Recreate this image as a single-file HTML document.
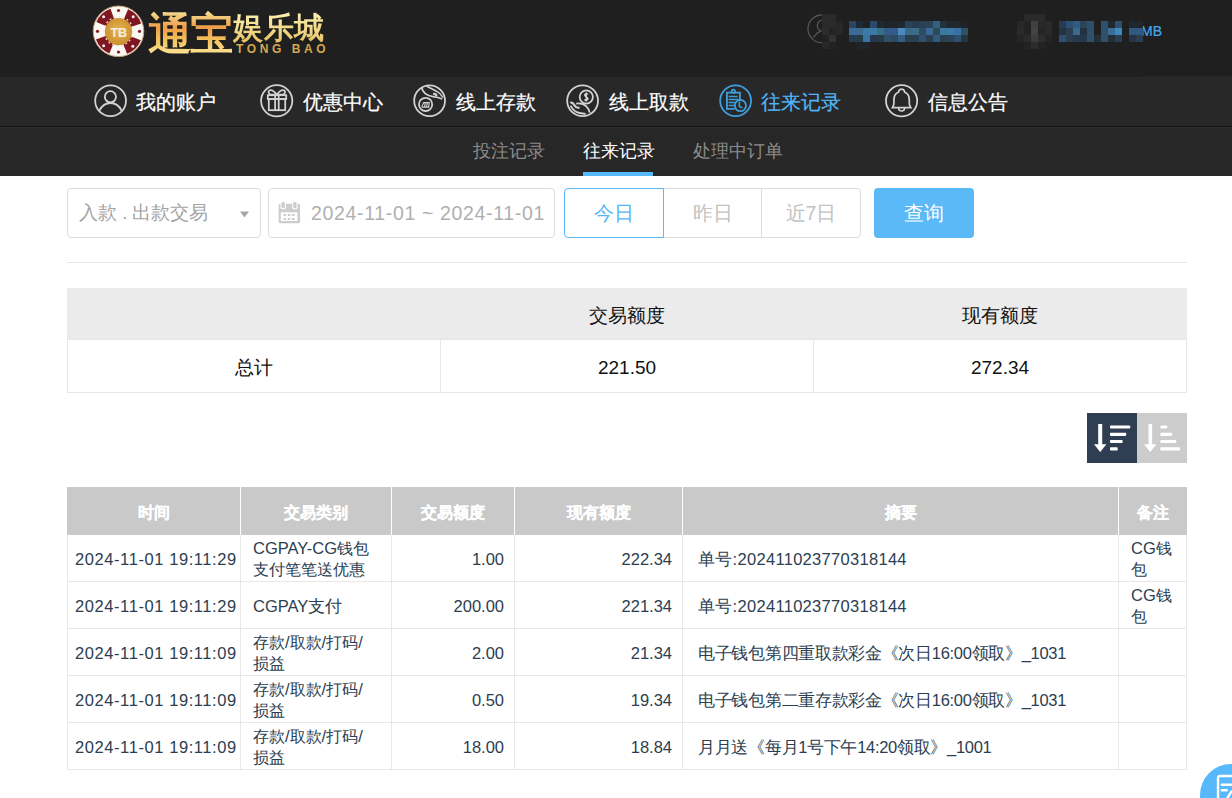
<!DOCTYPE html>
<html><head><meta charset="utf-8">
<style>
*{margin:0;padding:0;box-sizing:border-box}
html,body{width:1232px;height:798px;overflow:hidden;background:#fff;font-family:"Liberation Sans",sans-serif;position:relative}
.a{position:absolute}
i{position:absolute;display:block;width:7px;height:7px}
#hdr{left:0;top:0;width:1232px;height:76px;background:#1f1f1f}
#nav{left:0;top:76px;width:1232px;height:50px;background:#282828}
#navline{left:0;top:126px;width:1232px;height:1px;background:#141414}
#navline2{left:0;top:127px;width:1232px;height:1px;background:#2f2f2f}
#sub{left:0;top:128px;width:1232px;height:48px;background:#272727}
.ni{color:#fff;font-size:20px;line-height:24px;top:90px;white-space:nowrap;-webkit-text-stroke:0.2px currentColor}
.ic{position:absolute;top:82px;width:40px;height:40px}
.si{font-size:18px;line-height:22px;top:141px;color:#8c8c8c;white-space:nowrap}
.box{border:1px solid #dcdcdc;border-radius:4px;background:#fff}
.ph{color:#a3a3a3;font-size:18.5px;line-height:22px;white-space:nowrap}
.btn{top:188px;height:50px;border:1px solid #dcdcdc;color:#c2c2c2;font-size:19.5px;line-height:48px;text-align:center;background:#fff}
.th{height:48px;line-height:48px;text-align:center;color:#fff;font-weight:bold;font-size:16px;-webkit-text-stroke:0.25px #fff}
.td{height:46px;line-height:48px;font-size:16.5px;color:#2c3e50;white-space:nowrap}
.td2{height:46px;padding-top:3px;line-height:21px;font-size:16px;color:#2c3e50;white-space:nowrap}
.td .n,.td2 .n{font-size:16.5px}
.sh{height:52px;line-height:52px;text-align:center;font-size:18.5px;color:#111}
.sv{height:52px;line-height:52px;text-align:center;font-size:19px;color:#111}
</style></head><body>
<div id="hdr" class="a"></div>
<div id="nav" class="a"></div><div class="a" style="left:0;top:76px;width:1142px;height:1px;background:#1f1f1f"></div>
<div id="navline" class="a"></div>
<div id="navline2" class="a"></div>
<div id="sub" class="a"></div>

<!-- logo -->
<svg class="a" style="left:88px;top:2px" width="70" height="60" viewBox="0 0 70 60">
 <defs><radialGradient id="gd" cx="50%" cy="45%" r="55%"><stop offset="0" stop-color="#e8b54e"/><stop offset="1" stop-color="#c98d2e"/></radialGradient></defs>
 <circle cx="30.5" cy="29.3" r="25.3" fill="#fbf7f2" stroke="#c7a07a" stroke-width="1"/>
 <circle cx="30.5" cy="29.3" r="18.5" fill="none" stroke="#7f1620" stroke-width="11" stroke-dasharray="15.2 13.86" stroke-dashoffset="-7" transform="rotate(0 30.5 29.3)"/>
 <circle cx="30.5" cy="8.5" r="1.6" fill="#8a1a22"/><circle cx="30.5" cy="50" r="1.6" fill="#8a1a22"/>
 <circle cx="9.5" cy="29.3" r="1.6" fill="#8a1a22"/><circle cx="51.5" cy="29.3" r="1.6" fill="#8a1a22"/>
 <circle cx="30.5" cy="29.3" r="14.5" fill="none" stroke="#f2e6e0" stroke-width="1.2" stroke-dasharray="2 2.5"/><g fill="#f4eeee"><circle cx="15.6" cy="14.8" r="1.5"/><circle cx="45.2" cy="14.8" r="1.5"/><circle cx="15.6" cy="43.8" r="1.5"/><circle cx="44.8" cy="44.2" r="1.5"/></g>
 <circle cx="30.5" cy="29.7" r="13.6" fill="url(#gd)"/>
 <circle cx="30.5" cy="29.7" r="11.5" fill="none" stroke="#d59c3a" stroke-width="1"/>
 <text x="30.8" y="34.5" text-anchor="middle" font-family="Liberation Sans" font-weight="bold" font-size="12.5" fill="#f4efe6">TB</text>
</svg>
<div class="a" style="left:148px;top:10px;font-family:'Liberation Serif',serif;font-weight:bold;font-size:44px;line-height:50px;white-space:nowrap;letter-spacing:-2px;background:linear-gradient(180deg,#f6e49a 0%,#ee9c48 35%,#f3c45e 62%,#fff1b0 100%);-webkit-background-clip:text;background-clip:text;color:transparent">通宝</div>
<div class="a" style="left:233px;top:10px;font-family:'Liberation Serif',serif;font-weight:bold;font-size:30px;line-height:36px;letter-spacing:0.6px;white-space:nowrap;background:linear-gradient(180deg,#fff3b8 0%,#f1d783 60%,#e2b85a 100%);-webkit-background-clip:text;background-clip:text;color:transparent">娱乐城</div>
<div class="a" style="left:236px;top:42px;font-family:'Liberation Sans',sans-serif;font-weight:bold;font-size:12px;line-height:14px;letter-spacing:3.6px;white-space:nowrap;color:#d2a850">TONG BAO</div>

<!-- user info (pixelated) -->
<svg class="a" style="left:800px;top:8px" width="30" height="40" viewBox="0 0 30 40" fill="none" stroke="#555" stroke-width="1.3"><path d="M21.8,7 A13.85,13.85 0 0 0 21.8,34.7"/><path d="M21.8,12.2 C16.5,13.5 15.8,20.5 20.8,22.8 C17.5,24.5 15,26.5 13,29.5"/></svg>
<div class="a" style="left:1141px;top:23px;font-size:14px;line-height:17px;color:#45a8f0;-webkit-text-stroke:0.2px #45a8f0">MB</div>
<i style="left:822px;top:14px;background:#2a2a2a"></i><i style="left:829px;top:14px;background:#2a2a2a"></i><i style="left:822px;top:21px;background:#2a2a2a"></i><i style="left:829px;top:21px;background:#2a2a2a"></i><i style="left:836px;top:21px;background:#272727"></i><i style="left:822px;top:28px;background:#2c2c2c"></i><i style="left:829px;top:28px;background:#232323"></i><i style="left:836px;top:28px;background:#282828"></i><i style="left:822px;top:35px;background:#222222"></i><i style="left:829px;top:35px;background:#333333"></i><i style="left:822px;top:42px;background:#282828"></i><i style="left:829px;top:42px;background:#222222"></i>
<i style="left:849px;top:21px;background:#2a4560"></i><i style="left:856px;top:21px;background:#1f2a35"></i><i style="left:863px;top:21px;background:#1f2124"></i><i style="left:870px;top:21px;background:#2a4a68"></i><i style="left:877px;top:21px;background:#202830"></i><i style="left:884px;top:21px;background:#1f252b"></i><i style="left:891px;top:21px;background:#1f252b"></i><i style="left:898px;top:21px;background:#20282f"></i><i style="left:905px;top:21px;background:#2a4255"></i><i style="left:912px;top:21px;background:#273d4d"></i><i style="left:919px;top:21px;background:#2a3f55"></i><i style="left:926px;top:21px;background:#2b4358"></i><i style="left:933px;top:21px;background:#336080"></i><i style="left:940px;top:21px;background:#24303a"></i><i style="left:947px;top:21px;background:#20272d"></i><i style="left:954px;top:21px;background:#202830"></i><i style="left:961px;top:21px;background:#1f2226"></i><i style="left:849px;top:28px;background:#3a6a9a"></i><i style="left:856px;top:28px;background:#3a6a8f"></i><i style="left:863px;top:28px;background:#3a7aa5"></i><i style="left:870px;top:28px;background:#3a7aa5"></i><i style="left:877px;top:28px;background:#3a6e85"></i><i style="left:884px;top:28px;background:#345a8a"></i><i style="left:891px;top:28px;background:#335c8c"></i><i style="left:898px;top:28px;background:#4a8ac0"></i><i style="left:905px;top:28px;background:#3a6a88"></i><i style="left:912px;top:28px;background:#3a6e88"></i><i style="left:919px;top:28px;background:#2c4a60"></i><i style="left:926px;top:28px;background:#3a6a99"></i><i style="left:933px;top:28px;background:#2e4a55"></i><i style="left:940px;top:28px;background:#3a7aa0"></i><i style="left:947px;top:28px;background:#3a7aa5"></i><i style="left:954px;top:28px;background:#3a72a5"></i><i style="left:961px;top:28px;background:#2f5060"></i><i style="left:849px;top:35px;background:#263a50"></i><i style="left:856px;top:35px;background:#263c48"></i><i style="left:863px;top:35px;background:#3a74a0"></i><i style="left:870px;top:35px;background:#263850"></i><i style="left:877px;top:35px;background:#283a45"></i><i style="left:884px;top:35px;background:#2f5068"></i><i style="left:891px;top:35px;background:#2e4a60"></i><i style="left:898px;top:35px;background:#365e80"></i><i style="left:905px;top:35px;background:#2a4050"></i><i style="left:912px;top:35px;background:#2a4050"></i><i style="left:919px;top:35px;background:#2f5070"></i><i style="left:926px;top:35px;background:#2a3f50"></i><i style="left:933px;top:35px;background:#305a80"></i><i style="left:940px;top:35px;background:#2a4050"></i><i style="left:947px;top:35px;background:#2a4355"></i><i style="left:954px;top:35px;background:#2f5070"></i><i style="left:961px;top:35px;background:#263540"></i><i style="left:856px;top:42px;background:#1f2428"></i><i style="left:863px;top:42px;background:#1f2428"></i>
<i style="left:1024px;top:14px;background:#2a2a2a"></i><i style="left:1031px;top:14px;background:#2a2a2a"></i><i style="left:1038px;top:14px;background:#2a2a2a"></i><i style="left:1017px;top:21px;background:#282828"></i><i style="left:1024px;top:21px;background:#232323"></i><i style="left:1031px;top:21px;background:#404040"></i><i style="left:1038px;top:21px;background:#282828"></i><i style="left:1045px;top:21px;background:#2a2a2a"></i><i style="left:1017px;top:28px;background:#2a2a2a"></i><i style="left:1024px;top:28px;background:#222222"></i><i style="left:1031px;top:28px;background:#444444"></i><i style="left:1038px;top:28px;background:#252525"></i><i style="left:1045px;top:28px;background:#2a2a2a"></i><i style="left:1017px;top:35px;background:#252525"></i><i style="left:1024px;top:35px;background:#2a2a2a"></i><i style="left:1031px;top:35px;background:#3c3c3c"></i><i style="left:1038px;top:35px;background:#2e2e2e"></i><i style="left:1045px;top:35px;background:#242424"></i><i style="left:1024px;top:42px;background:#232323"></i><i style="left:1031px;top:42px;background:#2c2c2c"></i><i style="left:1038px;top:42px;background:#232323"></i>
<i style="left:1059px;top:21px;background:#263a55"></i><i style="left:1066px;top:21px;background:#2e5070"></i><i style="left:1073px;top:21px;background:#335a80"></i><i style="left:1080px;top:21px;background:#2a4558"></i><i style="left:1087px;top:21px;background:#2f5068"></i><i style="left:1101px;top:21px;background:#2e5070"></i><i style="left:1108px;top:21px;background:#20282e"></i><i style="left:1115px;top:21px;background:#2e5070"></i><i style="left:1129px;top:21px;background:#20282e"></i><i style="left:1136px;top:21px;background:#20282e"></i><i style="left:1059px;top:28px;background:#233345"></i><i style="left:1066px;top:28px;background:#2a4050"></i><i style="left:1073px;top:28px;background:#3a6a90"></i><i style="left:1080px;top:28px;background:#223040"></i><i style="left:1087px;top:28px;background:#2f5068"></i><i style="left:1101px;top:28px;background:#2f5068"></i><i style="left:1108px;top:28px;background:#3a6e99"></i><i style="left:1115px;top:28px;background:#3e88bb"></i><i style="left:1129px;top:28px;background:#2f5a80"></i><i style="left:1136px;top:28px;background:#2f5a80"></i><i style="left:1059px;top:35px;background:#2f5070"></i><i style="left:1066px;top:35px;background:#2a4050"></i><i style="left:1073px;top:35px;background:#263a4a"></i><i style="left:1080px;top:35px;background:#263850"></i><i style="left:1087px;top:35px;background:#2f5068"></i><i style="left:1094px;top:35px;background:#22303a"></i><i style="left:1101px;top:35px;background:#2f5068"></i><i style="left:1108px;top:35px;background:#22303a"></i><i style="left:1115px;top:35px;background:#2a4050"></i><i style="left:1129px;top:35px;background:#263445"></i><i style="left:1136px;top:35px;background:#2a4050"></i>
<!-- nav icons -->
<svg class="ic" style="left:90px" viewBox="0 0 40 40" fill="none" stroke="#d2d2d2" stroke-width="1.8">
 <circle cx="20.6" cy="18.8" r="15.4"/><circle cx="20.4" cy="14.8" r="5.6"/>
 <path d="M9.4,28.6 C12,23.5 16,21 20.5,21 C25,21 29,23.5 31.6,28.6"/>
</svg>
<svg class="ic" style="left:256px" viewBox="0 0 40 40" fill="none" stroke="#d2d2d2" stroke-width="1.8">
 <circle cx="20.7" cy="18.8" r="15.6"/>
 <rect x="11.8" y="13.2" width="18.4" height="3.8"/><rect x="12.8" y="17" width="16.4" height="11.2"/>
 <path d="M19.1,13.2 V28.2 M22.7,13.2 V28.2"/>
 <path d="M20.8,12.6 C18,9 15,7.5 13.2,8.6 C12,9.5 12.6,12 14.5,12.6 Z M20.8,12.6 C23.6,9 26.6,7.5 28.4,8.6 C29.6,9.5 29,12 27.1,12.6 Z"/>
</svg>
<svg class="ic" style="left:409px" viewBox="0 0 40 40" fill="none" stroke="#d2d2d2" stroke-width="1.8">
 <circle cx="20.6" cy="18.8" r="15.4"/><circle cx="16.6" cy="22.4" r="6.6"/>
 <path d="M12.6,25.1 H20.4 M12.9,24.6 L14.6,20.6 H20.3 L19.6,24.6 M16.4,20.6 L15.6,24.6 M18.3,20.6 L17.6,24.6" stroke-width="1.1"/>
 <path d="M12.6,5.2 C13.5,10.5 18,13.8 24,14.6 C27.5,15 30.5,15.8 33.2,17"/>
 <path d="M17.6,4.2 C21,5.5 24.5,7.8 27.5,9.2 C30.5,10.8 32.6,13 34,15.5" stroke-width="1.5"/>
 <path d="M24.2,12.2 C26,11.5 27.6,12.6 27.3,14.2" stroke-width="2.4"/>
</svg>
<svg class="ic" style="left:562px" viewBox="0 0 40 40" fill="none" stroke="#d2d2d2" stroke-width="1.8">
 <circle cx="20.6" cy="18.8" r="15.4"/><circle cx="24.3" cy="15" r="6.6"/>
 <path d="M26,12.4 C25.2,11.4 22.6,11.6 22.8,13.4 C23,15 25.8,14.8 25.9,16.6 C26,18.4 23.2,18.6 22.5,17.5 M24.3,10.6 V19.4" stroke-width="1.5"/>
 <path d="M8.2,20.8 C9.8,20 11.5,21.5 12.6,23.6 C13.6,25.5 15.6,26 17.5,25.6" stroke-width="2.2"/>
 <path d="M14.2,21.6 C18,21 22,22 24.6,24.6 C26.4,26.5 27.3,28.5 27.6,30.6"/>
 <path d="M8.6,23.6 C10.5,27.6 13.6,30.2 17.6,31 C19.6,31.4 21.6,31.6 23.6,32"/>
</svg>
<svg class="ic" style="left:715px" viewBox="0 0 40 40" fill="none" stroke="#3f9fdc" stroke-width="1.8">
 <circle cx="20.6" cy="18.8" r="15.4"/>
 <path d="M19.6,26.8 H11.9 V10.6 H16.6 M20,10.6 H24.9 V17.2"/>
 <circle cx="18.3" cy="9.3" r="1.7"/>
 <path d="M13.6,14.5 H22.6 M13.6,17.5 H23.6 M13.6,20.5 H19.8 M13.6,23.5 H19.2" stroke-width="1.6"/>
 <circle cx="25.4" cy="23.6" r="5.6"/>
 <path d="M24.4,19.7 V24.4 L27.4,25.9" stroke-width="1.6"/>
</svg>
<svg class="ic" style="left:881px" viewBox="0 0 40 40" fill="none" stroke="#d2d2d2" stroke-width="1.8">
 <circle cx="20.6" cy="18.8" r="15.6"/>
 <path d="M20.6,7.2 C18.7,7.2 17.8,8.7 17.4,10.2 C14.3,11.3 12.9,14.2 12.9,18 V21.5 C12.9,23.2 12.2,24.4 11.4,25.6 H29.8 C29,24.4 28.3,23.2 28.3,21.5 V18 C28.3,14.2 26.9,11.3 23.8,10.2 C23.4,8.7 22.5,7.2 20.6,7.2 Z" stroke-width="1.7"/>
 <path d="M17.6,26 A3,3 0 0 0 23.6,26" stroke-width="1.6"/>
</svg>

<!-- nav items -->
<div class="a ni" style="left:136px">我的账户</div>
<div class="a ni" style="left:303px">优惠中心</div>
<div class="a ni" style="left:456px">线上存款</div>
<div class="a ni" style="left:609px">线上取款</div>
<div class="a ni" style="left:761px;color:#52b5f8">往来记录</div>
<div class="a ni" style="left:928px">信息公告</div>

<!-- subnav -->
<div class="a si" style="left:473px;top:140px">投注记录</div>
<div class="a si" style="left:583px;top:140px;color:#fff">往来记录</div>
<div class="a" style="left:583px;top:172px;width:70px;height:4px;background:#55b8f8"></div>
<div class="a si" style="left:693px;top:140px">处理中订单</div>

<!-- filters -->
<div class="a box" style="left:67px;top:188px;width:194px;height:50px"></div>
<div class="a ph" style="left:79px;top:202px">入款 . 出款交易</div>
<svg class="a" style="left:239px;top:210px" width="11" height="9" viewBox="0 0 11 9"><path d="M1,1.5 H10 L5.5,7.5 Z" fill="#a6a6a6"/></svg>
<div class="a box" style="left:268px;top:188px;width:287px;height:50px"></div>
<svg class="a" style="left:278px;top:201px" width="23" height="24" viewBox="0 0 23 24">
 <path d="M0.6,4.5 Q0.6,2.8 2.3,2.8 H20.4 Q22.1,2.8 22.1,4.5 V20.5 Q22.1,22.2 20.4,22.2 H2.3 Q0.6,22.2 0.6,20.5 Z" fill="#cdcdcd"/>
 <rect x="2.8" y="11.3" width="16.6" height="8.7" fill="#fff"/>
 <rect x="2.5" y="0" width="5.4" height="8.2" rx="1.8" fill="#fff"/><rect x="14.2" y="0" width="5.4" height="8.2" rx="1.8" fill="#fff"/><rect x="3.5" y="1" width="3.4" height="6.2" rx="1.2" fill="#cdcdcd"/><rect x="15.2" y="1" width="3.4" height="6.2" rx="1.2" fill="#cdcdcd"/>
 <g fill="#cdcdcd"><rect x="5.5" y="13" width="2.6" height="2"/><rect x="9.8" y="13" width="2.6" height="2"/><rect x="14" y="13" width="2.6" height="2"/><rect x="5.5" y="17" width="2.6" height="2"/><rect x="9.8" y="17" width="2.6" height="2"/><rect x="14" y="17" width="2.6" height="2"/></g>
</svg>
<div class="a ph" style="left:311px;top:202px;font-size:19.5px;color:#b0b0b0;letter-spacing:0.66px">2024-11-01 ~ 2024-11-01</div>
<div class="a btn" style="left:564px;width:100px;border-radius:4px 0 0 4px;border-color:#5ab8f8;color:#55b5f8;z-index:2">今日</div>
<div class="a btn" style="left:663px;width:99px">昨日</div>
<div class="a btn" style="left:761px;width:100px;border-radius:0 4px 4px 0">近7日</div>
<div class="a" style="left:874px;top:188px;width:100px;height:50px;background:#5bb9f7;border-radius:4px;color:#fff;font-size:19.5px;line-height:50px;text-align:center">查询</div>
<div class="a" style="left:67px;top:262px;width:1120px;height:1px;background:#e6e6e6"></div>


<!-- sort buttons -->
<div class="a" style="left:1087px;top:413px;width:50px;height:50px;background:#2f3e52"></div>
<div class="a" style="left:1137px;top:413px;width:50px;height:50px;background:#cccccc"></div>
<svg class="a" style="left:1087px;top:413px" width="100" height="50" viewBox="0 0 100 50" fill="#fff">
 <rect x="11.2" y="11" width="4" height="21"/><path d="M7,31.2 H19.4 L13.2,39 Z"/>
 <rect x="23" y="12.4" width="20.2" height="3.2" rx="0.8"/><rect x="23" y="19.7" width="16.2" height="3.2" rx="0.8"/><rect x="23" y="26.9" width="12.6" height="3.2" rx="0.8"/><rect x="23" y="34.3" width="7.7" height="3.2" rx="0.8"/>
 <rect x="61.5" y="11" width="3.6" height="21"/><path d="M57,31.2 H69.4 L63.2,39 Z"/>
 <rect x="73.4" y="12.4" width="6.9" height="3.2" rx="0.8"/><rect x="73.4" y="19.7" width="11.8" height="3.2" rx="0.8"/><rect x="73.4" y="26.9" width="15.8" height="3.2" rx="0.8"/><rect x="73.4" y="34.3" width="19.8" height="3.2" rx="0.8"/>
</svg>

<div class="a" style="left:67px;top:288px;width:1120px;height:52px;background:#ebebeb"></div>
<div class="a" style="left:67px;top:339px;width:1120px;height:1px;background:#e6e6e6"></div>
<div class="a" style="left:67px;top:392px;width:1120px;height:1px;background:#e6e6e6"></div>
<div class="a" style="left:67px;top:340px;width:1px;height:52px;background:#e6e6e6"></div>
<div class="a" style="left:440px;top:340px;width:1px;height:52px;background:#e6e6e6"></div>
<div class="a" style="left:813px;top:340px;width:1px;height:52px;background:#e6e6e6"></div>
<div class="a" style="left:1186px;top:340px;width:1px;height:52px;background:#e6e6e6"></div>
<div class="a sv" style="left:67px;width:374px;top:342px">总计</div>
<div class="a sh" style="left:440px;width:374px;top:290px">交易额度</div>
<div class="a sv" style="left:440px;width:374px;top:342px">221.50</div>
<div class="a sh" style="left:813px;width:374px;top:290px">现有额度</div>
<div class="a sv" style="left:813px;width:374px;top:342px">272.34</div>
<div class="a" style="left:67px;top:487px;width:1120px;height:48px;background:#c9c9c9"></div>
<div class="a" style="left:240px;top:487px;width:1px;height:48px;background:#fff"></div>
<div class="a" style="left:391px;top:487px;width:1px;height:48px;background:#fff"></div>
<div class="a" style="left:514px;top:487px;width:1px;height:48px;background:#fff"></div>
<div class="a" style="left:682px;top:487px;width:1px;height:48px;background:#fff"></div>
<div class="a" style="left:1118px;top:487px;width:1px;height:48px;background:#fff"></div>
<div class="a th" style="left:67px;width:174px;top:489px">时间</div>
<div class="a th" style="left:240px;width:152px;top:489px">交易类别</div>
<div class="a th" style="left:391px;width:124px;top:489px">交易额度</div>
<div class="a th" style="left:514px;width:169px;top:489px">现有额度</div>
<div class="a th" style="left:682px;width:437px;top:489px">摘要</div>
<div class="a th" style="left:1118px;width:69px;top:489px">备注</div>
<div class="a" style="left:67px;top:581px;width:1120px;height:1px;background:#e8e8e8"></div>
<div class="a" style="left:67px;top:628px;width:1120px;height:1px;background:#e8e8e8"></div>
<div class="a" style="left:67px;top:675px;width:1120px;height:1px;background:#e8e8e8"></div>
<div class="a" style="left:67px;top:722px;width:1120px;height:1px;background:#e8e8e8"></div>
<div class="a" style="left:67px;top:769px;width:1120px;height:1px;background:#e8e8e8"></div>
<div class="a" style="left:67px;top:535px;width:1px;height:235px;background:#e8e8e8"></div>
<div class="a" style="left:240px;top:535px;width:1px;height:235px;background:#e8e8e8"></div>
<div class="a" style="left:391px;top:535px;width:1px;height:235px;background:#e8e8e8"></div>
<div class="a" style="left:514px;top:535px;width:1px;height:235px;background:#e8e8e8"></div>
<div class="a" style="left:682px;top:535px;width:1px;height:235px;background:#e8e8e8"></div>
<div class="a" style="left:1118px;top:535px;width:1px;height:235px;background:#e8e8e8"></div>
<div class="a" style="left:1186px;top:535px;width:1px;height:235px;background:#e8e8e8"></div>
<div class="a td" style="left:75px;top:535px;letter-spacing:0.58px">2024-11-01 19:11:29</div>
<div class="a td2" style="left:253px;top:535px"><span class="n">CGPAY-CG</span>钱包<br>支付笔笔送优惠</div>
<div class="a td" style="left:391px;width:113px;text-align:right;top:535px">1.00</div>
<div class="a td" style="left:514px;width:158px;text-align:right;top:535px">222.34</div>
<div class="a td" style="left:698px;top:535px;letter-spacing:0.3px">单号<span class="n">:202411023770318144</span></div>
<div class="a td2" style="left:1131px;top:535px"><span class="n">CG</span>钱<br>包</div>
<div class="a td" style="left:75px;top:582px;letter-spacing:0.58px">2024-11-01 19:11:29</div>
<div class="a td" style="left:253px;top:582px"><span class="n">CGPAY</span>支付</div>
<div class="a td" style="left:391px;width:113px;text-align:right;top:582px">200.00</div>
<div class="a td" style="left:514px;width:158px;text-align:right;top:582px">221.34</div>
<div class="a td" style="left:698px;top:582px;letter-spacing:0.3px">单号<span class="n">:202411023770318144</span></div>
<div class="a td2" style="left:1131px;top:582px"><span class="n">CG</span>钱<br>包</div>
<div class="a td" style="left:75px;top:629px;letter-spacing:0.58px">2024-11-01 19:11:09</div>
<div class="a td2" style="left:253px;top:629px">存款<span class="n">/</span>取款<span class="n">/</span>打码<span class="n">/</span><br>损益</div>
<div class="a td" style="left:391px;width:113px;text-align:right;top:629px">2.00</div>
<div class="a td" style="left:514px;width:158px;text-align:right;top:629px">21.34</div>
<div class="a td" style="left:698px;top:629px;letter-spacing:-0.3px">电子钱包第四重取款彩金《次日<span class="n">16:00</span>领取》<span class="n">_1031</span></div>
<div class="a td" style="left:75px;top:676px;letter-spacing:0.58px">2024-11-01 19:11:09</div>
<div class="a td2" style="left:253px;top:676px">存款<span class="n">/</span>取款<span class="n">/</span>打码<span class="n">/</span><br>损益</div>
<div class="a td" style="left:391px;width:113px;text-align:right;top:676px">0.50</div>
<div class="a td" style="left:514px;width:158px;text-align:right;top:676px">19.34</div>
<div class="a td" style="left:698px;top:676px;letter-spacing:-0.3px">电子钱包第二重存款彩金《次日<span class="n">16:00</span>领取》<span class="n">_1031</span></div>
<div class="a td" style="left:75px;top:723px;letter-spacing:0.58px">2024-11-01 19:11:09</div>
<div class="a td2" style="left:253px;top:723px">存款<span class="n">/</span>取款<span class="n">/</span>打码<span class="n">/</span><br>损益</div>
<div class="a td" style="left:391px;width:113px;text-align:right;top:723px">18.00</div>
<div class="a td" style="left:514px;width:158px;text-align:right;top:723px">18.84</div>
<div class="a td" style="left:698px;top:723px;letter-spacing:-0.3px">月月送《每月<span class="n">1</span>号下午<span class="n">14:20</span>领取》<span class="n">_1001</span></div>

<!-- floating button -->
<div class="a" style="left:1200px;top:764px;width:62px;height:62px;border-radius:50%;background:#58b8fc"></div>
<svg class="a" style="left:1215px;top:774px" width="18" height="25" viewBox="0 0 18 25" fill="none" stroke="#fff">
 <path d="M18,2 H5 Q3,2 3,4 V25" stroke-width="2.4"/>
 <path d="M6.8,10.8 H18 M6.8,16.3 H11.8 M12.5,24 L16.5,17.5 L18,18" stroke-width="2.4" stroke-linecap="round"/>
</svg>
</body></html>
